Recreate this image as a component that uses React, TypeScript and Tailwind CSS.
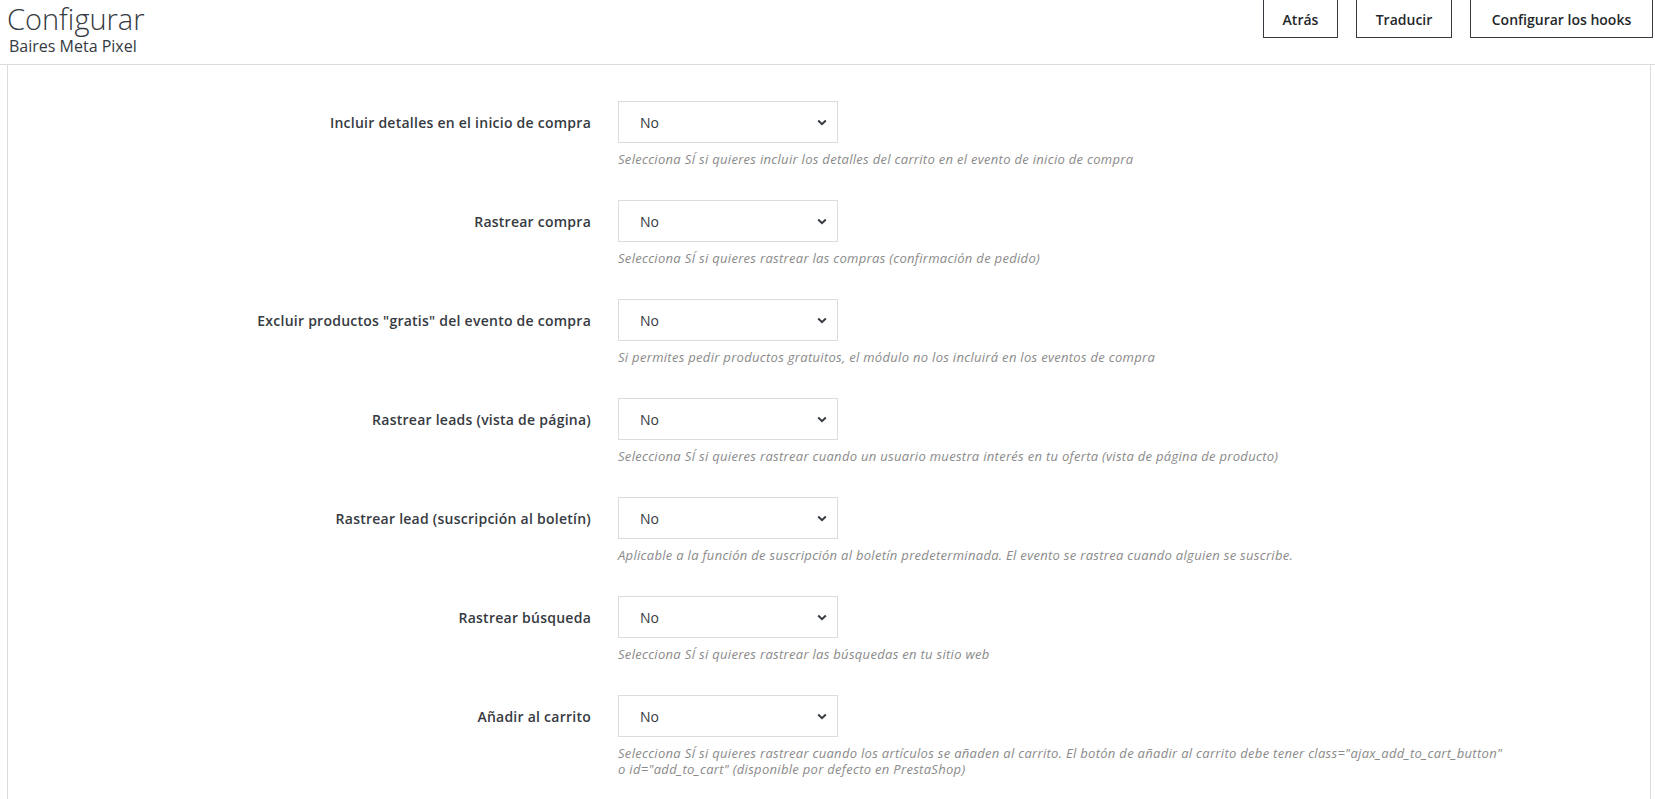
import React from "react";

const rows: { label: string; help: React.ReactNode }[] = [
  {
    label: "Incluir detalles en el inicio de compra",
    help: "Selecciona SÍ si quieres incluir los detalles del carrito en el evento de inicio de compra",
  },
  {
    label: "Rastrear compra",
    help: "Selecciona SÍ si quieres rastrear las compras (confirmación de pedido)",
  },
  {
    label: 'Excluir productos "gratis" del evento de compra',
    help: "Si permites pedir productos gratuitos, el módulo no los incluirá en los eventos de compra",
  },
  {
    label: "Rastrear leads (vista de página)",
    help: "Selecciona SÍ si quieres rastrear cuando un usuario muestra interés en tu oferta (vista de página de producto)",
  },
  {
    label: "Rastrear lead (suscripción al boletín)",
    help: "Aplicable a la función de suscripción al boletín predeterminada. El evento se rastrea cuando alguien se suscribe.",
  },
  {
    label: "Rastrear búsqueda",
    help: "Selecciona SÍ si quieres rastrear las búsquedas en tu sitio web",
  },
  {
    label: "Añadir al carrito",
    help: (
      <>
        Selecciona SÍ si quieres rastrear cuando los artículos se añaden al carrito. El botón de añadir al carrito debe
        tener class="ajax_add_to_cart_button"
        <br />
        o id="add_to_cart" (disponible por defecto en PrestaShop)
      </>
    ),
  },
];

function FakeSelect() {
  return (
    <div className="w-[220px] h-[42px] border border-[#dcdcdc] bg-white flex items-center justify-between pl-[21px] pr-[10px]">
      <span className="text-[14px] text-[#363a41]">No</span>
      <svg width="10" height="7" viewBox="0 0 10 7" className="mt-[1px]">
        <polyline points="1.2,1.5 5,5.2 8.8,1.5" fill="none" stroke="#363a41" strokeWidth="2" />
      </svg>
    </div>
  );
}

export default function App() {
  return (
    <div
      className="w-[1655px] h-[799px] overflow-hidden bg-white flex flex-col"
      style={{ fontFamily: "'Open Sans', 'Noto Sans', sans-serif" }}
    >
      <header className="h-[65px] shrink-0 border-b border-[#dcdcdc] flex justify-between items-start">
        <div className="pl-[7px] pt-[0px]">
          <h1 className="text-[29px] leading-[37px] font-light text-[#363a41]">Configurar</h1>
          <div className="text-[16px] leading-[18px] text-[#363a41] pl-[2px]">Baires Meta Pixel</div>
        </div>
        <div className="flex gap-[18px] pr-[2px] -mt-[2px]">
          <button className="h-[40px] w-[75px] border border-[#363a41] text-[14px] font-semibold text-[#25282b] pt-[2px]">
            Atrás
          </button>
          <button className="h-[40px] w-[96px] border border-[#363a41] text-[14px] font-semibold text-[#25282b] pt-[2px]">
            Traducir
          </button>
          <button className="h-[40px] w-[183px] border border-[#363a41] text-[14px] font-semibold text-[#25282b] pt-[2px]">
            Configurar los hooks
          </button>
        </div>
      </header>
      <div className="flex-1 ml-[7px] mr-[4px] border-l border-r border-[#dcdcdc] pt-[36px]">
        <div className="flex flex-col gap-[33px]">
          {rows.map((r, i) => (
            <div key={i} className="flex items-start">
              <div className="w-[583px] h-[42px] flex items-center justify-end text-[14px] font-semibold tracking-[0.25px] text-[#363a41]">
                {r.label}
              </div>
              <div className="ml-[27px] flex flex-col">
                <FakeSelect />
                <div className="mt-[8px] text-[13px] leading-[16px] italic tracking-[0.3px] text-[#8a8a8a] w-[950px]">
                  {r.help}
                </div>
              </div>
            </div>
          ))}
        </div>
      </div>
    </div>
  );
}
